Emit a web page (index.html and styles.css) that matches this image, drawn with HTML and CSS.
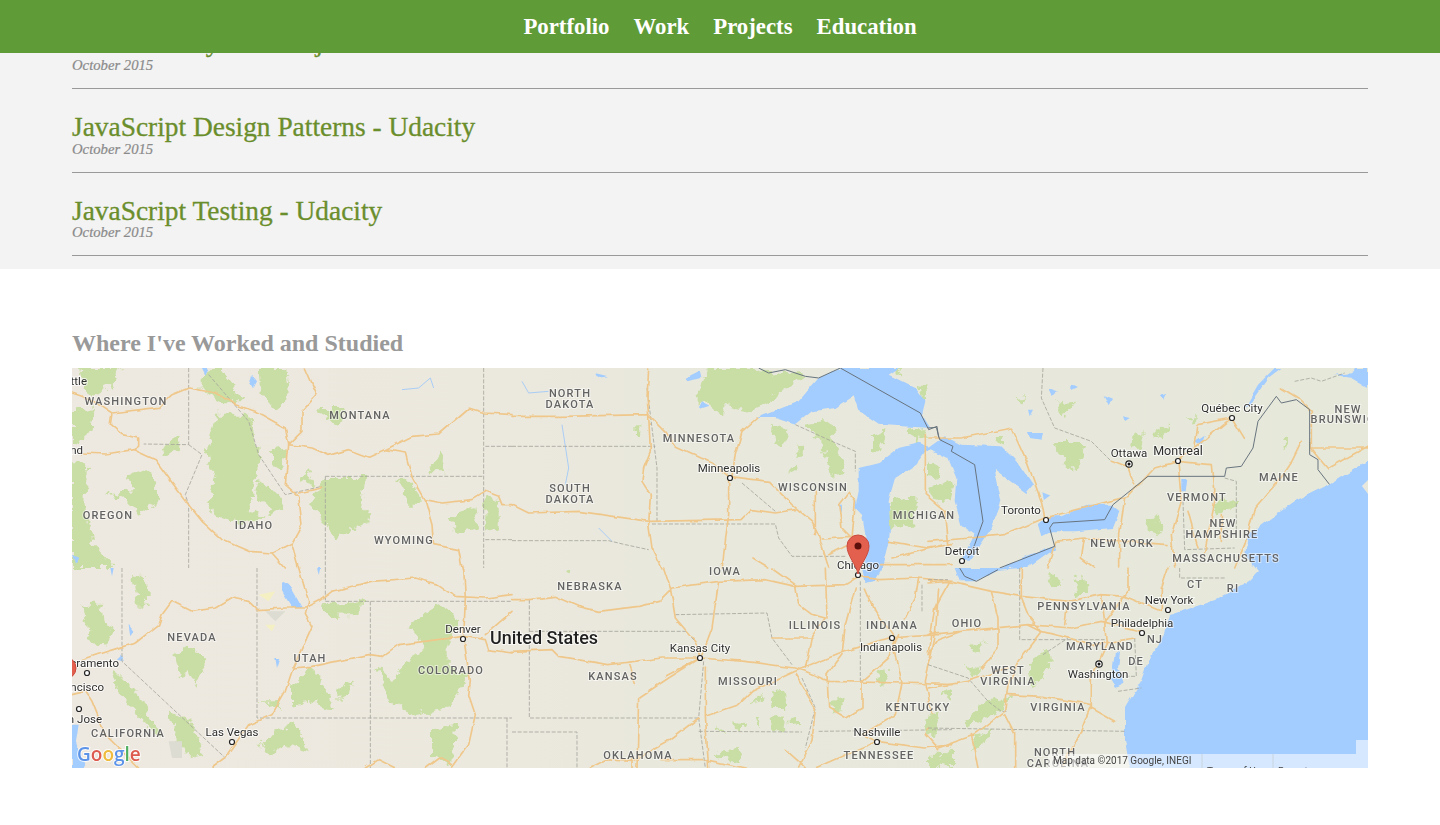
FILE: index.html
```html
<!DOCTYPE html>
<html>
<head>
    <title>Portfolio</title>
    <link rel="stylesheet" href="styles.css">
</head>
<body>
    <nav class="top-nav">
        <a href="#portfolio">Portfolio</a>
        <a href="#work">Work</a>
        <a href="#projects">Projects</a>
        <a href="#education">Education</a>
    </nav>

    <section class="education">
        <div class="course">
            <h3>HTML Study Web Objects</h3>
            <p>October 2015</p>
        </div>
        <div class="course">
            <h3>JavaScript Design Patterns - Udacity</h3>
            <p>October 2015</p>
        </div>
        <div class="course">
            <h3>JavaScript Testing - Udacity</h3>
            <p>October 2015</p>
        </div>
    </section>

    <section class="map-section">
        <h2>Where I've Worked and Studied</h2>
        <svg class="map" viewBox="72 368 1296 400" xmlns="http://www.w3.org/2000/svg">
            <defs>
                <linearGradient id="land" x1="0" x2="1" y1="0" y2="0">
                    <stop offset="0" stop-color="#eee9e0"/>
                    <stop offset="0.35" stop-color="#ebe8de"/>
                    <stop offset="0.5" stop-color="#e8e8dc"/>
                    <stop offset="1" stop-color="#e6e8da"/>
                </linearGradient>
                <filter id="rough-park" x="-10%" y="-10%" width="120%" height="120%">
                    <feTurbulence type="fractalNoise" baseFrequency="0.035" numOctaves="3" seed="4"/>
                    <feDisplacementMap in="SourceGraphic" scale="42" xChannelSelector="R" yChannelSelector="G"/>
                </filter>
                <filter id="rough-line" x="-5%" y="-5%" width="110%" height="110%">
                    <feTurbulence type="fractalNoise" baseFrequency="0.025" numOctaves="2" seed="8"/>
                    <feDisplacementMap in="SourceGraphic" scale="14" xChannelSelector="R" yChannelSelector="G"/>
                </filter>
                <filter id="rough-coast" x="-5%" y="-5%" width="110%" height="110%">
                    <feTurbulence type="fractalNoise" baseFrequency="0.09" numOctaves="3" seed="2"/>
                    <feDisplacementMap in="SourceGraphic" scale="5" xChannelSelector="R" yChannelSelector="G"/>
                </filter>
            </defs>
            <rect class="land" x="72" y="368" width="1296" height="400"/>

            <g class="terrain">
                <!-- north west -->
                <g transform="translate(72 368) scale(.33333)">
                    <path class="park" d="M20 0 140 0 130 40 60 90 40 60Z M0 130 80 120 60 170 30 220 0 230Z M430 140 530 140 560 240 550 330 530 430 580 440 530 470 430 440 410 400 430 320 400 260 410 220Z M380 30 440 0 520 100 450 100 380 60Z M560 0 640 0 650 100 600 120 565 70Z M560 340 620 380 640 420 600 440 550 370Z M0 280 50 280 40 400 60 520 130 600 0 600Z M100 375 190 370 170 320 230 300 260 400 200 440 150 390Z M760 330 880 330 870 400 900 450 800 510 760 470 720 400Z M745 120 820 120 800 170 760 160Z M1130 450 1210 410 1215 480 1150 500Z M1240 380 1280 400 1280 480 1240 490Z M970 335 1020 335 1050 410 1020 410Z M1075 300 1105 250 1120 310 1080 310Z M680 340 710 310 730 350Z M290 220 330 200 320 240 270 270Z M600 250 640 240 630 300 600 290Z"/>
                    <path class="water" d="M390 0 410 0 400 20Z M540 20 555 40 545 60 535 40Z M0 560 20 570 10 590Z"/>
                    <path class="river" d="M990 65 1040 60 1075 30 1085 60"/>
                    <path class="border" d="M350 0 350 230 215 228 M350 230 390 260 340 380 350 410 350 600 M760 325 1235 325 M1235 0 1235 600 M760 325 760 600 M1240 235 1320 235 M1240 515 1320 515 M410 20 530 160 560 260 640 380 750 355"/>
                    <path class="road" d="M0 75 30 85 90 115 120 135 260 118 300 80 350 60 430 75 490 110 550 130 640 180 650 230 720 240 770 262 830 245 890 268 940 245 1020 205 1100 198 1190 120 1240 135 1320 140 M120 135 115 170 150 200 200 210 200 235 185 245 M30 255 100 258 185 245 250 275 290 330 350 410 390 460 450 515 530 550 600 555 660 525 690 470 680 385 640 350 650 230 M650 230 690 190 690 130 735 80 700 0 M680 375 750 360 M940 245 1000 255 1020 330 1060 400 1080 470 1085 530 1160 545 1170 600 M1060 395 1110 405 1200 395 1240 370 1280 385 1290 410 1320 410 M600 555 640 600 M660 530 680 600"/>
                </g>

                <!-- south west -->
                <g transform="translate(72 568) scale(.33333)">
                    <path class="park" d="M180 20 220 20 230 110 200 120Z M30 110 90 110 100 170 140 190 90 230 50 210Z M120 300 190 370 260 480 260 510 200 450 140 380Z M290 430 350 450 400 560 360 570 310 510Z M310 260 360 230 400 290 370 350 350 310 320 320Z M750 105 870 100 860 140 770 145Z M660 350 720 300 760 360 790 430 720 400 660 410Z M790 370 850 330 840 370 800 400Z M910 290 960 340 1000 280 1060 240 1010 170 1100 110 1160 150 1130 220 1130 300 1190 330 1130 420 1030 440 950 400Z M1080 480 1150 470 1140 590 1080 560Z M560 400 610 400 630 430Z M570 520 670 460 710 550 640 530 580 560Z"/>
                    <path class="gray-area" d="M580 130 640 130 610 160Z M290 520 330 520 330 570 300 570Z"/>
                    <path class="sand" d="M580 170 610 170 600 190Z M560 80 610 70 590 100Z"/>
                    <path class="water" d="M630 40 650 50 690 120 660 120 630 70Z M170 170 185 190 175 205Z M610 270 625 270 615 300Z M0 470 20 470 10 530 40 590 35 600 0 600Z M150 260 155 280 135 275Z M115 0 125 0 120 25Z M735 0 745 0 740 20Z"/>
                    <path class="border" d="M150 0 150 280 460 570 M555 0 555 450 1320 450 M895 100 895 600 M760 100 1320 100 M760 0 760 100 M1305 450 1305 600"/>
                    <path class="road" d="M300 100 270 140 260 170 190 225 155 235 90 255 30 275 M300 100 360 130 430 120 480 90 530 100 555 125 640 120 700 120 740 100 780 70 900 40 1030 30 1100 50 1150 85 1240 90 1320 80 M680 0 710 100 700 140 720 175 660 310 640 370 600 440 530 470 460 570 420 600 M660 300 720 295 890 260 930 265 980 230 1100 215 1175 205 1240 215 1250 245 1320 255 M1175 0 1180 90 1175 210 1195 340 1190 380 1210 440 1190 530 1140 600 M1240 200 1320 130 M880 600 920 575 970 600 M1060 600 1100 570 1140 590 M40 370 60 400 100 500 200 600 M0 380 40 370"/>
                </g>

                <!-- north middle -->
                <g transform="translate(512 368) scale(.33333)">
                    <path class="park" d="M560 60 590 0 700 0 740 10 880 20 800 80 720 130 640 110 640 150 590 110 560 110Z M780 170 830 190 810 240 790 230Z M870 170 960 160 970 230 1000 310 960 320 930 220Z M1080 200 1120 190 1110 250 1080 250Z M1130 400 1220 390 1200 470 1120 480Z M1260 360 1320 340 1320 400Z M1150 0 1170 0 1160 30Z M1220 50 1250 60 1230 90Z M1190 190 1240 180 1220 230Z M830 300 850 290 850 310 830 315Z M370 175 385 175 385 195 370 195Z M850 230 870 230 870 260 855 260Z"/>
                    <path class="water" d="M735 150 860 100 920 30 985 0 1160 0 1130 20 1210 60 1240 100 1230 140 1255 180 1100 170 1040 130 1025 85 970 120 900 130 850 170 790 150Z M1040 300 1100 285 1160 240 1220 225 1260 240 1240 250 1210 290 1150 330 1130 400 1135 480 1130 520 1110 600 1060 600 1060 500 1050 440 1030 420 1040 370Z M520 30 560 10 565 30 530 40Z M245 15 285 25 255 30Z M570 100 590 110 560 120Z M980 410 990 410 985 435Z"/>
                    <path class="river" d="M150 170 170 300 160 350 M30 40 50 75 110 70 M260 480 300 520"/>
                    <path class="border" d="M0 235 430 235 M405 60 435 300 435 460 M0 518 290 518 340 530 410 545 M420 468 790 468 800 510 840 565 1000 565 M690 345 790 430 M850 170 960 220 1030 250 1030 310"/>
                    <path class="road" d="M0 145 150 145 410 140 460 190 490 235 600 285 650 325 M410 0 405 90 410 140 415 250 395 300 390 340 415 380 410 470 420 540 450 600 M650 325 770 340 840 410 900 460 920 500 950 600 M650 325 650 440 630 600 M735 150 690 190 670 260 660 325 M0 410 50 435 200 430 410 460 690 455 720 425 790 435 850 425 M910 370 910 500 M1010 370 980 410 990 480 1020 510 M1010 375 1030 400 1020 510 M720 570 770 600 M930 510 1020 505 M950 560 1010 530 M1130 520 1250 540 1320 530 M1140 570 1300 530 M1240 200 1240 380 1300 430 1310 530 M1100 590 1320 590"/>
                    <path class="country" d="M740 0 770 15 820 5 880 25 920 30 985 0 1225 135 1250 185 1275 175 1280 210 1320 230"/>
                </g>

                <!-- south middle -->
                <g transform="translate(512 568) scale(.33333)">
                    <path class="park" d="M720 400 750 380 740 410Z M780 370 815 365 820 420 785 420Z M775 450 815 445 820 490 790 490Z M830 445 855 440 855 475 830 470Z M660 460 695 465 680 490Z M725 450 740 450 735 475Z M615 480 645 490 615 495Z M600 555 680 545 690 585 630 570Z M960 400 1000 390 985 430 965 440Z M1090 320 1120 300 1130 350 1110 360Z M1240 450 1280 430 1270 500 1240 500Z M1290 380 1320 360 1320 400Z M1260 590 1320 540 1320 600Z M155 15 175 10 170 25Z"/>
                    <path class="water" d="M1050 0 1110 0 1085 40 1060 45Z"/>
                    <path class="border" d="M52 95 52 450 560 450 M52 190 520 190 550 220 M490 140 765 135 780 210 840 290 M0 492 195 492 195 600 M560 490 870 492 M575 280 560 450 580 600 M1045 40 1045 340 M1230 50 1230 130 M870 330 910 420 880 540 M920 490 1320 485"/>
                    <path class="road" d="M0 95 50 95 130 85 200 115 260 130 380 115 440 100 470 70 480 60 620 40 760 35 850 55 1000 50 1040 25 1100 35 1220 30 1320 40 M455 0 475 60 490 150 550 220 565 270 M620 40 600 180 570 260 M0 250 120 245 140 265 290 290 450 270 565 270 700 280 850 300 880 310 950 340 1170 345 1320 350 M565 270 470 330 380 390 375 600 M565 270 460 325 M580 300 580 445 590 600 M350 290 370 350 M580 445 680 410 720 370 850 310 M850 310 1000 250 1130 210 1280 200 M850 320 910 420 900 520 860 600 M780 0 850 50 860 110 900 140 940 150 900 200 880 300 M940 0 945 150 M1030 60 1000 170 990 260 945 320 950 420 1000 450 1050 420 1050 340 1130 270 1160 200 M1060 60 1090 130 1140 200 1170 345 1150 440 1050 500 1095 520 1240 540 1320 530 M1220 30 1210 90 1180 150 M1280 60 1270 200 1240 340 1260 440 1240 500 1280 545 M780 210 900 210 M230 600 280 575 360 580 460 525 560 450 M360 570 360 600 M450 575 580 575 700 600 M820 545 860 580 880 600 M910 600 1000 560 1095 520"/>
                </g>

                <!-- north east -->
                <g transform="translate(928 368) scale(.33333)">
                    <path class="park" d="M375 225 480 225 470 270 435 305 400 270Z M385 100 445 95 430 130 400 145Z M620 200 650 195 640 240 615 245Z M680 175 725 180 700 205 680 210Z M260 90 295 85 285 105Z M780 145 805 145 795 165Z M650 445 690 450 700 500 660 490Z M880 390 930 400 900 430 860 430Z M1060 210 1075 210 1070 245Z M0 280 40 300 30 330 0 320Z M0 360 75 350 70 390 30 400Z M205 210 230 210 225 230Z"/>
                    <path class="water" d="M0 240 50 205 100 230 220 235 275 290 315 350 295 375 200 305 220 400 190 480 155 530 125 575 100 575 140 500 100 470 80 400 85 330 60 270Z M330 470 360 445 400 445 480 410 550 410 575 430 555 480 440 490 370 490 340 505Z M210 600 380 530 385 540 300 600Z M960 115 1020 30 1060 0 1040 0 990 50 950 120Z M1220 20 1280 15 1320 30 1320 60 1270 30Z M760 330 775 330 770 370 760 370Z M360 60 390 70 370 80Z M430 50 450 60 430 70Z M530 85 555 95 545 115Z M695 80 715 75 705 95Z M585 145 605 150 590 160Z M300 195 345 195 340 215 305 210Z M340 370 365 380 345 395Z M800 220 830 200 820 230Z M300 125 315 125 305 145Z"/>
                    <path class="border" d="M345 0 340 90 380 180 490 220 550 280 M765 400 770 545 920 540 M890 330 925 340 925 500 M1100 40 1150 30 1180 40 1250 15"/>
                    <path class="road" d="M250 180 300 290 340 400 350 450 M0 210 100 210 250 180 M350 450 230 500 130 510 0 520 M350 450 600 385 680 300 750 280 910 150 M550 280 600 300 620 350 M750 280 850 290 860 400 830 550 M910 150 950 215 M910 150 810 170 800 240 M1060 60 1110 90 1150 130 1150 240 1200 300 1320 235 M750 280 760 400 730 500 740 600 M590 390 575 500 575 600 M470 510 380 520 360 600 M470 510 460 570 500 600 M470 510 720 530 M1120 220 1090 280 1050 340 980 420 950 530 920 600 M1150 240 1320 240 M780 430 810 540 M880 440 880 520"/>
                    <path class="country" d="M0 180 25 178 35 215 75 235 70 250 140 290 165 460 140 530 120 570 M215 600 380 535 365 480 375 465 530 455 555 410 660 325 890 325 895 300 940 295 975 240 990 160 1045 85 1060 105 1105 95 1145 125 1145 260 1170 275 1170 305 1205 350"/>
                </g>

                <!-- ocean and bays, in page coordinates -->
                <path class="ocean" d="M1368 461 1328 485 1295 501 1275 515 1248 535 1245 555 1258 571 1248 581 1215 600 1191 608 1171 615 1161 641 1148 661 1141 681 1125 708 1125 741 1131 775 1380 775 1380 461Z M1115 651 1120 652 1118 668 1125 683 1115 688 1110 678 1113 665Z M1355 368 1368 368 1368 380 1350 376Z"/>
                <path class="land" d="M1368 480 1362 486 1368 494Z"/>

                <!-- south east -->
                <g transform="translate(928 568) scale(.33333)">
                    <path class="park" d="M355 30 380 15 400 50 370 60Z M440 40 465 30 485 70 450 85Z M130 240 170 220 160 260Z M300 290 360 240 370 290 310 360Z M110 290 150 300 140 330Z M0 440 30 430 20 490 0 500Z M110 460 180 400 250 380 220 430 120 475Z M130 500 190 480 170 530 130 550Z M0 560 40 560 30 600 0 600Z"/>
                    <path class="water" d="M80 0 95 40 140 40 210 5 280 0Z"/>
                    <path class="border" d="M275 0 275 215 530 215 M345 260 420 210 M0 35 60 35 M0 480 590 490 M755 0 755 30 890 30 M0 290 120 330 180 400 220 430 240 430 M570 370 640 360 M620 210 625 325 600 325"/>
                    <path class="road" d="M0 45 60 40 190 70 280 85 420 100 520 80 590 85 700 130 M0 200 100 190 300 170 430 180 520 160 640 190 M190 70 210 150 210 240 160 300 M65 40 20 120 0 260 M280 0 280 90 300 140 340 190 270 280 240 350 230 430 140 500 30 540 M520 80 530 160 535 230 490 330 490 420 560 460 M600 0 600 70 530 160 M420 100 410 170 M0 360 120 340 240 300 M0 260 30 215 100 190 M240 380 340 385 490 410 M490 410 450 510 400 600 M720 0 700 60 700 130 M230 440 260 500 260 600 M300 170 340 190 500 230 620 210 M130 500 150 600"/>
                    <path class="country" d="M95 0 110 25 145 40 210 5"/>
                </g>
            </g>

            <!-- state labels -->
            <g class="states">
                <text x="126" y="405">WASHINGTON</text>
                <text x="360" y="419">MONTANA</text>
                <text x="108" y="519">OREGON</text>
                <text x="254" y="529">IDAHO</text>
                <text x="404" y="544">WYOMING</text>
                <text x="192" y="641">NEVADA</text>
                <text x="310" y="662">UTAH</text>
                <text x="451" y="674">COLORADO</text>
                <text x="128" y="737">CALIFORNIA</text>
                <text x="570" y="397">NORTH</text>
                <text x="570" y="408">DAKOTA</text>
                <text x="570" y="492">SOUTH</text>
                <text x="570" y="503">DAKOTA</text>
                <text x="699" y="442">MINNESOTA</text>
                <text x="813" y="491">WISCONSIN</text>
                <text x="924" y="519">MICHIGAN</text>
                <text x="590" y="590">NEBRASKA</text>
                <text x="725" y="575">IOWA</text>
                <text x="815" y="629">ILLINOIS</text>
                <text x="892" y="629">INDIANA</text>
                <text x="613" y="680">KANSAS</text>
                <text x="748" y="685">MISSOURI</text>
                <text x="918" y="711">KENTUCKY</text>
                <text x="638" y="759">OKLAHOMA</text>
                <text x="879" y="759">TENNESSEE</text>
                <text x="967" y="627">OHIO</text>
                <text x="1084" y="610">PENNSYLVANIA</text>
                <text x="1100" y="650">MARYLAND</text>
                <text x="1155" y="643">NJ</text>
                <text x="1136" y="665">DE</text>
                <text x="1008" y="674">WEST</text>
                <text x="1008" y="685">VIRGINIA</text>
                <text x="1058" y="711">VIRGINIA</text>
                <text x="1055" y="756">NORTH</text>
                <text x="1058" y="767">CAROLINA</text>
                <text x="1195" y="588">CT</text>
                <text x="1233" y="592">RI</text>
                <text x="1279" y="481">MAINE</text>
                <text x="1197" y="501">VERMONT</text>
                <text x="1223" y="527">NEW</text>
                <text x="1222" y="538">HAMPSHIRE</text>
                <text x="1122" y="547">NEW YORK</text>
                <text x="1226" y="562">MASSACHUSETTS</text>
                <text x="1348" y="413">NEW</text>
                <text x="1347" y="423">BRUNSWICK</text>
            </g>

            <!-- city labels and dots -->
            <g class="cities">
                <text class="end" x="87" y="385">Seattle</text>
                <text class="end" x="83" y="454">Portland</text>
                <text class="end" x="119" y="667">Sacramento</text>
                <text class="end" x="104" y="691">San Francisco</text>
                <text class="end" x="102" y="723">San Jose</text>
                <text x="232" y="736">Las Vegas</text>
                <text x="463" y="633">Denver</text>
                <text x="729" y="472">Minneapolis</text>
                <text x="858" y="569">Chicago</text>
                <text x="700" y="652">Kansas City</text>
                <text x="891" y="651">Indianapolis</text>
                <text x="877" y="736">Nashville</text>
                <text x="962" y="555">Detroit</text>
                <text x="1021" y="514">Toronto</text>
                <text x="1129" y="457">Ottawa</text>
                <text class="big" x="1178" y="455">Montreal</text>
                <text x="1232" y="412">Québec City</text>
                <text x="1169" y="604">New York</text>
                <text x="1142" y="627">Philadelphia</text>
                <text x="1098" y="678">Washington</text>
                <text class="country-name" x="544" y="644">United States</text>
            </g>
            <g class="dots">
                <circle cx="87" cy="673" r="2.5"/>
                <circle cx="79" cy="709" r="2.5"/>
                <circle cx="232" cy="742" r="2.5"/>
                <circle cx="463" cy="639" r="2.5"/>
                <circle cx="730" cy="478" r="2.5"/>
                <circle cx="858" cy="575" r="2.5"/>
                <circle cx="700" cy="658" r="2.5"/>
                <circle cx="892" cy="638" r="2.5"/>
                <circle cx="877" cy="742" r="2.5"/>
                <circle cx="962" cy="561" r="2.5"/>
                <circle cx="1046" cy="520" r="2.5"/>
                <circle cx="1178" cy="461" r="2.5"/>
                <circle cx="1232" cy="418" r="2.5"/>
                <circle cx="1168" cy="610" r="2.5"/>
                <circle cx="1142" cy="633" r="2.5"/>
                <circle cx="1129" cy="464" r="3.2"/>
                <circle class="capital" cx="1129" cy="464" r="1.5"/>
                <circle cx="1099" cy="664" r="3.2"/>
                <circle class="capital" cx="1099" cy="664" r="1.5"/>
            </g>

            <!-- markers -->
            <path class="pin" d="M858 574C856 564 847 556 847 546A11 11 0 0 1 869 546C869 556 860 564 858 574Z"/>
            <circle class="pin-hole" cx="858" cy="546" r="3.5"/>
            <ellipse class="pin" cx="65" cy="668" rx="11" ry="11"/>

            <!-- attribution -->
            <rect class="attr-bg" x="1048" y="754" width="320" height="14"/>
            <rect class="attr-bg" x="1356" y="740" width="12" height="14"/>
            <path class="attr-line" d="M1202 754V768M1273 754V768"/>
            <text class="attr" x="1053" y="764">Map data ©2017 Google, INEGI</text>
            <text class="attr" x="1207" y="775">Terms of Use</text>
            <text class="attr" x="1278" y="775">Report a map error</text>
            <text class="google" x="77" y="761"><tspan class="g-blue">G</tspan><tspan class="g-red">o</tspan><tspan class="g-yellow">o</tspan><tspan class="g-blue">g</tspan><tspan class="g-green">l</tspan><tspan class="g-red">e</tspan></text>
        </svg>
    </section>
</body>
</html>
```

FILE: styles.css
```css
body {
    margin: 0;
    background-color: #fff;
    font-family: 'Liberation Serif', serif;
}

.top-nav {
    position: fixed;
    top: 0;
    left: 0;
    right: 0;
    height: 53px;
    display: flex;
    justify-content: center;
    align-items: center;
    gap: 24px;
    background-color: #5f9b37;
    z-index: 10;
}

.top-nav a {
    color: #fff;
    font-size: 22.8px;
    font-weight: bold;
    text-decoration: none;
}

.education {
    background-color: #f3f3f3;
    padding: 5.5px 72px 13px;
}

.course {
    padding-top: 23px;
    border-bottom: 1px solid #999;
}

.course h3 {
    margin: 0;
    color: #6b8e2c;
    font-size: 27.4px;
    font-weight: normal;
    line-height: 31px;
    -webkit-text-stroke: .3px #6b8e2c;
}

.course:first-child h3 {
    margin: -2px 0 2px;
}

.course p {
    margin: -2.5px 0 15px;
    color: #8a8a8a;
    font-size: 14.7px;
    font-style: italic;
    line-height: 16px;
    -webkit-text-stroke: .2px #8a8a8a;
}

.map-section {
    padding: 59px 72px 57px;
}

.map-section h2 {
    margin: 0 0 10px;
    color: #999;
    font-size: 24px;
    line-height: 30px;
}

.map {
    display: block;
    width: 1296px;
    height: 400px;
}

.terrain {
    filter: blur(.4px);
}

.land {
    fill: url(#land);
}

.park {
    fill: #c9dea4;
    filter: url(#rough-park);
}

.gray-area {
    fill: #dcdcd2;
}

.sand {
    fill: #f4f0c4;
}

.water {
    fill: #a3ccff;
    filter: url(#rough-line);
}

.ocean {
    fill: #a3ccff;
    filter: url(#rough-coast);
}

.river {
    fill: none;
    stroke: #a9cdf5;
    stroke-width: 3;
}

.border {
    fill: none;
    stroke: #a6a69e;
    stroke-width: 2.5;
    stroke-dasharray: 12 5;
}

.road {
    fill: none;
    stroke: #efc78a;
    stroke-width: 5;
    stroke-linejoin: round;
    stroke-linecap: round;
    filter: url(#rough-line);
}

.country {
    fill: none;
    stroke: #67737d;
    stroke-width: 3;
}

.states text {
    fill: #636363;
    font: 500 11px Roboto, sans-serif;
    letter-spacing: 1.15px;
    text-anchor: middle;
    stroke: rgba(255, 255, 255, .5);
    stroke-width: 2px;
    paint-order: stroke;
}

.cities text {
    fill: #2f2f2f;
    font: 400 11.5px Roboto, sans-serif;
    text-anchor: middle;
    stroke: rgba(255, 255, 255, .7);
    stroke-width: 2px;
    paint-order: stroke;
}

.cities text.end {
    text-anchor: end;
}

.cities text.big {
    font-size: 12.5px;
}

.cities text.country-name {
    fill: #1f1f1f;
    font-size: 18px;
    font-weight: 500;
}

.dots circle {
    fill: #fff;
    stroke: #222;
    stroke-width: 1.2;
}

.dots circle.capital {
    fill: #111;
    stroke: none;
}

.pin {
    fill: #e4604e;
    stroke: #c9493c;
    stroke-width: 1;
}

.pin-hole {
    fill: #5c0f0b;
}

.attr-bg {
    fill: rgba(255, 255, 255, .55);
}

.attr-line {
    stroke: #c9d4de;
    stroke-width: 1;
}

.attr {
    fill: #444;
    font: 10px Roboto, sans-serif;
}

.google {
    font: 600 19px 'Open Sans', sans-serif;
    stroke: rgba(255, 255, 255, .8);
    stroke-width: 2px;
    paint-order: stroke;
}

.g-blue { fill: #5b93e8; }
.g-red { fill: #dd5b4e; }
.g-yellow { fill: #eebb3c; }
.g-green { fill: #4fb060; }
```
